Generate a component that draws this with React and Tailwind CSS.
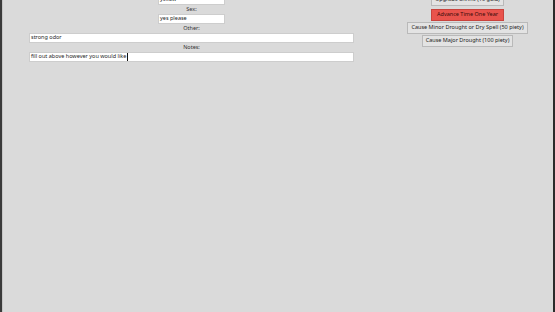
const font = { fontFamily: '"Noto Sans", "Open Sans", sans-serif' };

function Field({ value, wide, caret }) {
  return (
    <div
      className={`h-[10px] bg-white border border-[#cdcdcd] flex items-center px-[1px] text-[5.5px] leading-none text-[#1e1e1e] whitespace-nowrap overflow-hidden ${
        wide ? "w-[325px]" : "w-[67px]"
      }`}
    >
      <span>{value}</span>
      {caret && <span className="inline-block w-[1px] h-[8px] bg-[#111] ml-[0.5px]"></span>}
    </div>
  );
}

function Label({ children }) {
  return (
    <div className="h-[9px] flex items-center justify-center text-[5.5px] leading-none text-[#333]">
      {children}
    </div>
  );
}

function Btn({ children, danger }) {
  return (
    <button
      className={`h-[12px] flex items-center justify-center text-[5.5px] leading-none whitespace-nowrap border ${
        danger
          ? "px-[5px] bg-[#e9534c] border-[#c9433d] text-[#3a0c0a]"
          : "px-[3px] bg-[#e3e3e3] border-[#b9b9b9] text-[#222]"
      }`}
    >
      {children}
    </button>
  );
}

export default function App() {
  return (
    <div
      className="w-[555px] h-[312px] overflow-hidden bg-[#dadada] border-l-[2px] border-l-[#3a3a3a] border-r-[2px] border-r-[#2b2b2b] flex"
      style={font}
    >
      <div className="w-[1px] h-full bg-[#c6c6c6]"></div>
      <div className="w-[377px] flex flex-col items-center -mt-[5px]">
        <Field value="yellow" />
        <Label>Sex:</Label>
        <Field value="yes please" />
        <Label>Other:</Label>
        <Field value="strong odor" wide />
        <Label>Notes:</Label>
        <Field value="fill out above however you would like" wide caret />
      </div>
      <div className="flex-1 flex flex-col items-center -mt-[6px] pl-[2px]">
        <Btn>Upgrade Shrine (10 gold)</Btn>
        <div className="h-[3px]"></div>
        <Btn danger>Advance Time One Year</Btn>
        <div className="h-[1px]"></div>
        <Btn>Cause Minor Drought or Dry Spell (50 piety)</Btn>
        <div className="h-[1px]"></div>
        <Btn>Cause Major Drought (100 piety)</Btn>
      </div>
    </div>
  );
}
